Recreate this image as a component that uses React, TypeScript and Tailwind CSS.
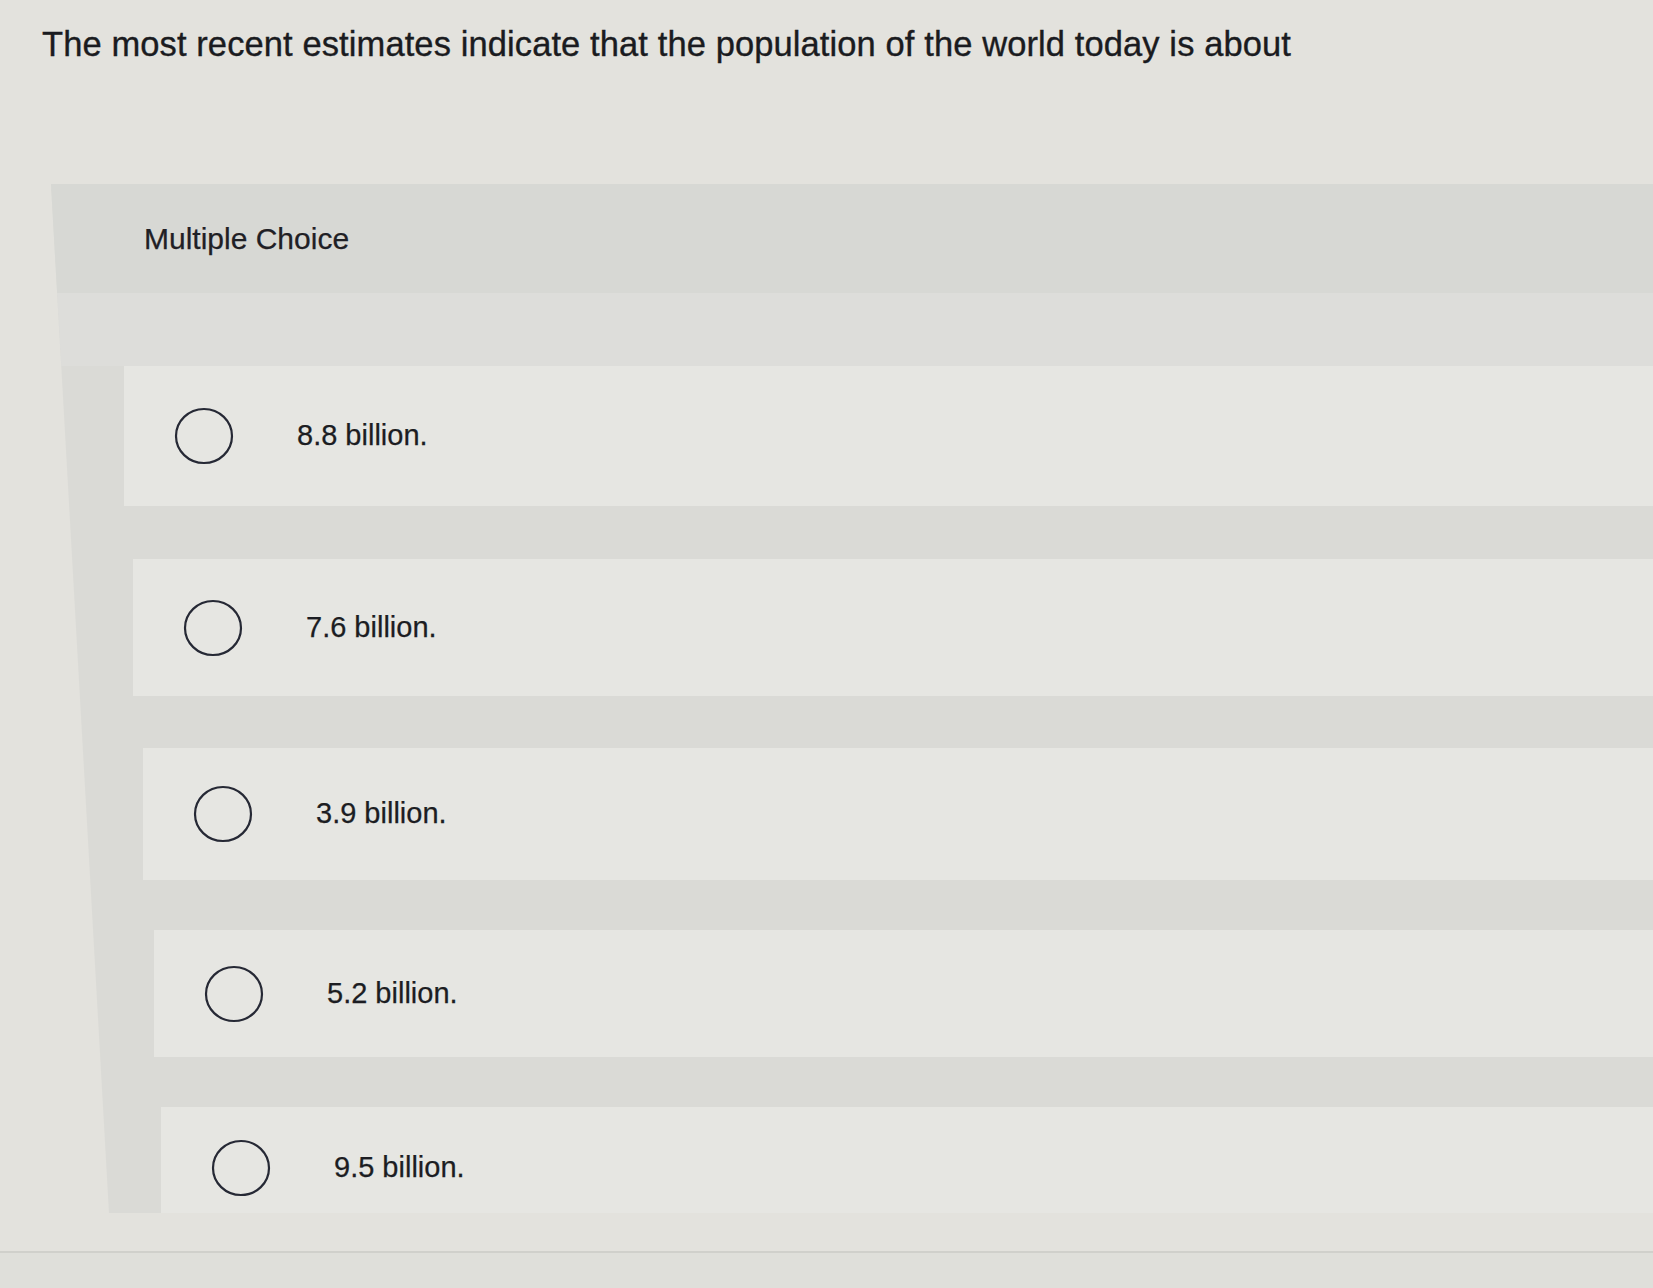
import React from "react";

type Choice = {
  label: string;
  row: string; // row box: offset + height
  inner: string; // alignment inside row
};

const CHOICES: Choice[] = [
  { label: "8.8 billion.", row: "ml-[73px] h-[140px]", inner: "items-center" },
  { label: "7.6 billion.", row: "ml-[82px] h-[137px] mt-[53px]", inner: "items-center" },
  { label: "3.9 billion.", row: "ml-[92px] h-[132px] mt-[52px]", inner: "items-center" },
  { label: "5.2 billion.", row: "ml-[103px] h-[127px] mt-[50px]", inner: "items-center" },
  { label: "9.5 billion.", row: "ml-[110px] h-[106px] mt-[50px]", inner: "items-center pt-4" },
];

const RadioCircle: React.FC = () => (
  <svg width="60" height="58" viewBox="0 0 60 58" className="shrink-0">
    <ellipse cx="30" cy="29" rx="28" ry="27" fill="none" stroke="#262935" strokeWidth="2.2" />
  </svg>
);

const App: React.FC = () => {
  return (
    <div className="min-h-screen w-full overflow-hidden bg-[#e3e2dd] font-['Liberation_Sans',Arial,sans-serif] text-[#1a1b20]">
      {/* question */}
      <div className="pl-[42px] pt-[22px]">
        <h1 className="text-[34.5px] leading-[44px] tracking-[0.1px] whitespace-nowrap [-webkit-text-stroke:0.35px_#1a1b20]">
          The most recent estimates indicate that the population of the world today is about
        </h1>
      </div>

      {/* answer panel, skewed a bit like the photo */}
      <div className="mt-[118px] ml-[51px] bg-[#dadad6] [clip-path:polygon(0_0,100%_0,100%_100%,58px_100%)]">
        <div className="h-[109px] bg-[#d7d8d4] flex items-center pl-[93px]">
          <span className="text-[30px] text-[#1f2025] [-webkit-text-stroke:0.25px_#1f2025]">Multiple Choice</span>
        </div>

        <div className="h-[73px] bg-[#dddddA]" />

        <div className="flex flex-col">
          {CHOICES.map((c) => (
            <div key={c.label} className={`${c.row} bg-[#e6e6e2] flex ${c.inner}`}>
              <div className="pl-[50px]">
                <RadioCircle />
              </div>
              <span className="ml-[63px] text-[29px] text-[#1c1d22] [-webkit-text-stroke:0.25px_#1c1d22]">
                {c.label}
              </span>
            </div>
          ))}
        </div>
      </div>

      <div className="h-[38px]" />
      <div className="h-[2px] bg-[#d0d0cb]" />
      <div className="h-[40px] bg-[#dfdfda]" />
    </div>
  );
};

export default App;
